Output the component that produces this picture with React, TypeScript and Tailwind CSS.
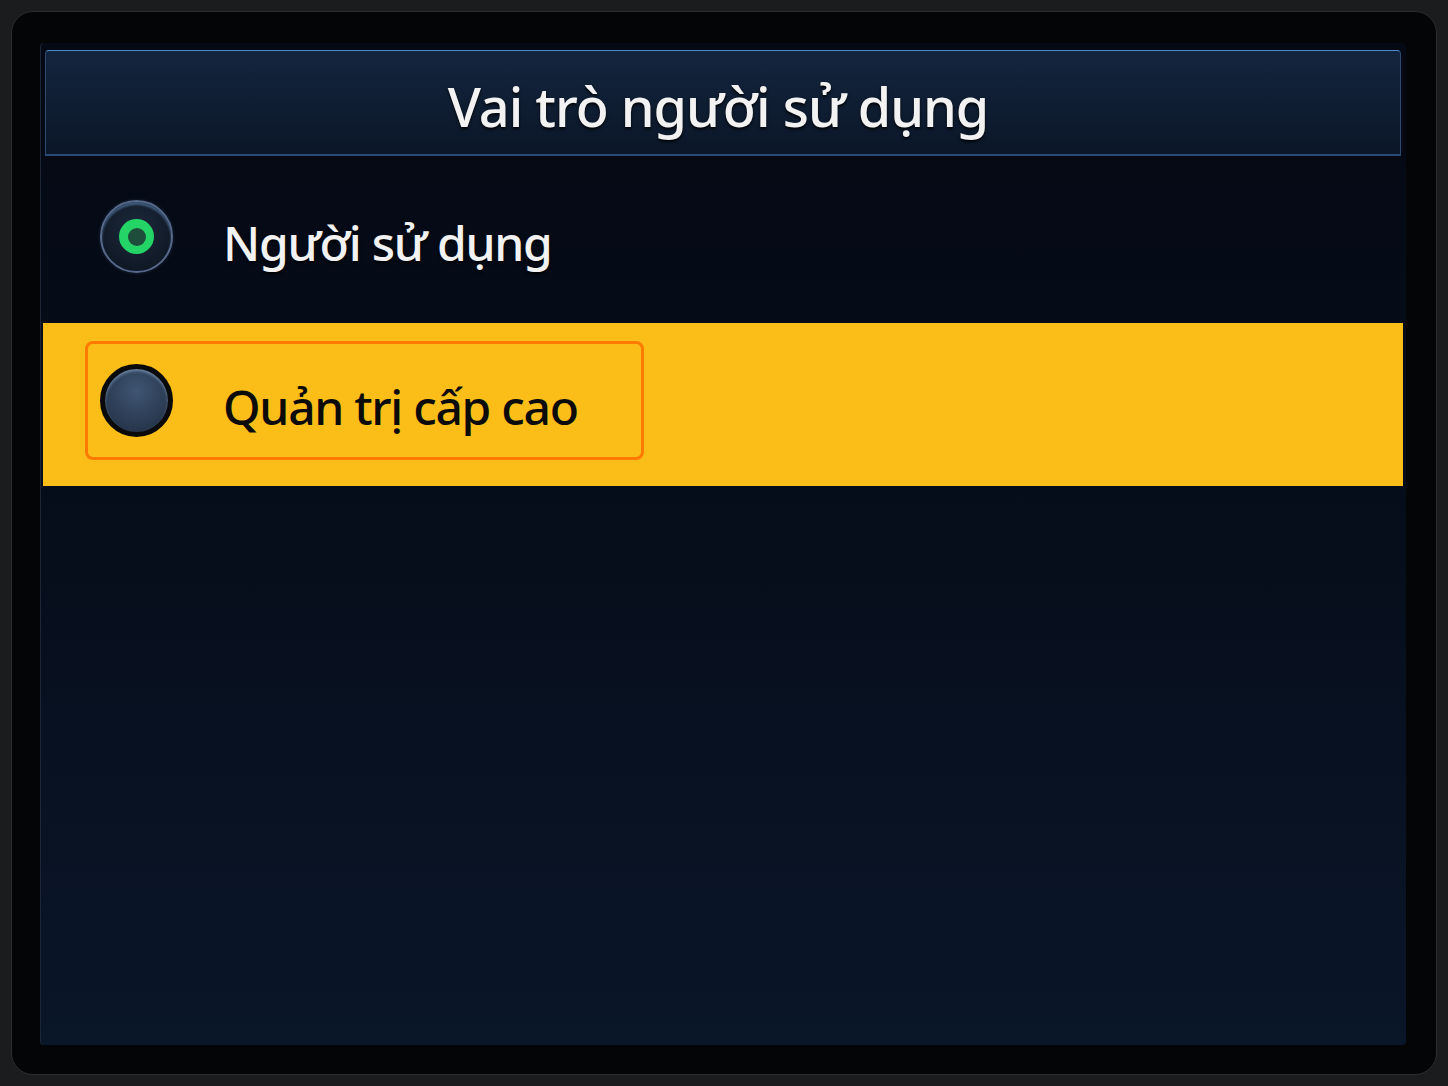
import React, { useState } from "react";

type Role = { id: string; label: string };

const roles: Role[] = [
  { id: "user", label: "Người sử dụng" },
  { id: "admin", label: "Quản trị cấp cao" },
];

function RadioDot({ checked, focused }: { checked: boolean; focused: boolean }) {
  if (checked) {
    return (
      <span className="flex h-[73px] w-[73px] shrink-0 items-center justify-center rounded-full border-2 border-[#56698a] bg-[radial-gradient(circle_at_50%_40%,#1d2a3d,#0b121d)] shadow-[0_0_0_2px_#0b1220,inset_0_3px_2px_rgba(120,170,225,0.4)]">
        <span className="flex h-[35px] w-[35px] items-center justify-center rounded-full bg-[#25d466]">
          <span className="h-[18px] w-[18px] rounded-full bg-[#1f4d3c]" />
        </span>
      </span>
    );
  }
  return (
    <span
      className={`h-[73px] w-[73px] shrink-0 rounded-full bg-[radial-gradient(circle_at_50%_35%,#3f5572,#1f2c40)] ${
        focused
          ? "border-[5px] border-[#0a0a0a] shadow-[inset_0_2px_3px_rgba(170,200,235,0.5)]"
          : "border-2 border-[#4b5d78]"
      }`}
    />
  );
}

export default function App() {
  const [selected, setSelected] = useState("user");
  const [focus, setFocus] = useState("admin");

  return (
    <div
      className="flex h-screen w-full bg-[#1b1c1d] p-[11px]"
      style={{ fontFamily: '"Noto Sans", "Open Sans", sans-serif' }}
    >
      {/* bezel */}
      <div className="flex flex-1 rounded-[22px] border border-[#2b2d30] bg-[#040506] pb-[29px] pl-[28px] pr-[30px] pt-[31px]">
        {/* screen */}
        <div className="flex flex-1 flex-col overflow-hidden rounded-[4px] bg-[linear-gradient(180deg,#040913_0%,#060d1a_45%,#0a1629_100%)] shadow-[inset_1px_0_0_#1d2636]">
          <div className="mx-[5px] mt-[7px] flex h-[106px] items-center justify-center rounded-t-[4px] border border-b-2 border-[#2b4a72] border-t-[#5088cc] bg-[linear-gradient(180deg,#13253e_0%,#0f1d32_55%,#0b1628_100%)] pr-[10px] pt-[8px]">
            <h1 className="text-[54px] font-medium tracking-[-1px] text-[#f2f2f2] [text-shadow:0_2px_3px_rgba(0,0,0,0.85)]">
              Vai trò người sử dụng
            </h1>
          </div>

          <div className="flex flex-col">
            {roles.map((r, i) => {
              const focused = focus === r.id;
              const checked = selected === r.id;
              return (
                <button
                  key={r.id}
                  onClick={() => {
                    setSelected(r.id);
                    setFocus(r.id);
                  }}
                  className={`mx-[3px] flex items-center px-[42px] text-left ${
                    i === 0 ? "h-[167px] pb-[6px]" : "h-[163px] pb-[8px]"
                  } ${focused ? "bg-[#fbbd18]" : ""}`}
                >
                  <span
                    className={`flex h-[119px] w-[559px] items-center gap-[50px] rounded-[8px] pl-[12px] ${
                      focused ? "border-[3px] border-[#ff7a00]" : "border-[3px] border-transparent"
                    }`}
                  >
                    <RadioDot checked={checked} focused={focused} />
                    <span
                      className={`mt-[12px] text-[48px] font-medium tracking-[-1.3px] ${
                        focused
                          ? "text-[#0b0b0b]"
                          : "text-[#f2f2f2] [text-shadow:0_2px_3px_rgba(0,0,0,0.9)]"
                      }`}
                    >
                      {r.label}
                    </span>
                  </span>
                </button>
              );
            })}
          </div>
        </div>
      </div>
    </div>
  );
}
